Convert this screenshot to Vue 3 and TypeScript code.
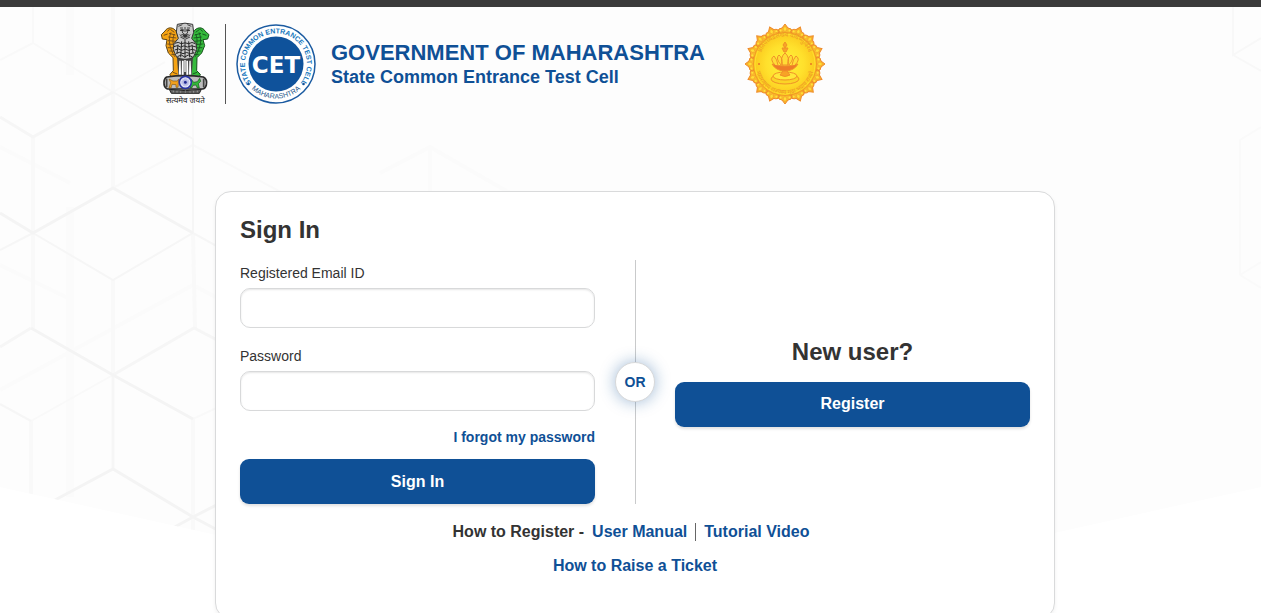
<script setup lang="ts">
import { ref } from 'vue'

interface BackdropLine {
  d: string
  width: number
  color: string
}

const email = ref('')
const password = ref('')

const leftLines: BackdropLine[] = [
  { d: 'M70 0V68 M70 200V490', width: 8, color: '#fbfbfb' },
  { d: 'M0 383L193 278L260 314 M0 140L70 176 M0 258L70 292', width: 4, color: '#fbfbfb' },
  { d: 'M33 0V36L113 85 M33 36L0 53 M193 0V132 M113 85L165 55 M113 181L193 138L290 190 M113 368L31 414 M113 368L193 412L240 390', width: 2, color: '#f9f9f9' },
  { d: 'M113 0V85 M33 130V226 M113 85V181 M33 226V321 M113 273V368 M193 226L195 321 M31 414V500 M193 412V530', width: 4, color: '#f9f9f9' },
  { d: 'M33 226L113 273L193 226L240 252 M33 226L0 243 M0 397L31 414 M113 85L193 132V226', width: 2, color: '#f6f6f6' },
  { d: 'M0 110L33 130L113 85 M0 340L31 321 M113 368L194 321L240 345 M113 368V462', width: 3, color: '#f6f6f6' },
  { d: 'M0 206L33 226L113 181L193 226 M31 321L113 368L193 412 M55 493L113 462L193 510L240 535 M160 528L193 510L240 486', width: 3, color: '#f4f4f4' },
  { d: 'M380 166L430 140L510 186 M430 140V186', width: 4, color: '#fbfbfb' },
]

const petals = Array.from({ length: 16 }, (_, i) => i * 22.5)
const spokes = Array.from({ length: 12 }, (_, i) => i * 15)
</script>

<template>
  <div class="page">
    <div class="topbar"></div>

    <div class="backdrop" aria-hidden="true">
      <svg class="pattern-left" width="520" height="540" viewBox="0 0 520 540" fill="none">
        <path v-for="line in leftLines" :key="line.d" :d="line.d" :stroke="line.color" :stroke-width="line.width" />
      </svg>
      <svg class="pattern-right" width="30" height="300" viewBox="0 0 30 300" fill="none" stroke="#f8f8f8" stroke-width="2">
        <path d="M2 0V48L30 31M2 48L30 64" />
        <path d="M9 250V133L30 120M9 268V250M9 268L30 255M9 268L30 281" stroke="#fafafa" />
      </svg>
    </div>

    <header class="header">
      <svg class="emblem" viewBox="15 12 150 252" role="img" aria-label="State Emblem of India">
        <!-- side lions -->
        <path fill="#f5a313" stroke="#5c451a" stroke-width="3" d="M65 42C55 26 38 26 30 39L19 50L22 63L36 65L33 83L40 105L54 119L55 158L45 169L47 177H72L78 76Z" />
        <path fill="#35ba3c" stroke="#17511d" stroke-width="3" d="M115 42C125 26 143 26 150 39L162 50L158 63L144 65L149 83L140 105L126 119L125 158L136 169L133 177H109L102 76Z" />
        <g fill="none" stroke="#76501b" stroke-width="3">
          <path d="M26 52L38 48M37 40L44 34M46 34L58 43M42 46L61 51M40 57L64 60M39 68L65 70M37 78L66 80M38 89L66 90M43 99L67 100M49 109L66 110M48 43C38 67 44 89 59 116M58 48C51 65 52 83 67 105M54 163L67 168" />
        </g>
        <g fill="none" stroke="#185c20" stroke-width="3">
          <path d="M154 52L142 48M143 40L136 34M134 34L122 43M138 46L119 51M140 57L116 60M141 68L115 70M143 78L114 80M142 89L114 90M137 99L113 100M131 109L114 110M132 43C142 67 136 89 121 116M122 48C129 65 128 83 113 105M126 163L113 168" />
        </g>
        <!-- central lion -->
        <path fill="#444" d="M66 118H114L110 176H70Z" />
        <path fill="#c9c9c9" stroke="#333" stroke-width="3" d="M67 19Q90 12 113 19L116 43L110 61L123 77L125 95L115 118Q90 130 65 118L55 95L57 77L70 61L64 42Z" />
        <path fill="none" stroke="#444" stroke-width="3" d="M70 25L82 20M109 25L97 20M75 30H84M96 30H105M75 37L84 39L82 45M105 37L96 39L98 45M90 27V42M83 45L90 50L98 45M74 50Q90 66 106 50M76 57L90 64L105 57M79 50H101" />
        <path fill="#333" d="M77 34h9v5h-9zM94 34h9v5h-9zM83 51h15l-4 7h-7z" />
        <g fill="none" stroke="#292929" stroke-width="3">
          <path d="M59 76Q70 70 79 77Q90 72 101 77Q111 70 121 77M57 86Q68 79 77 87Q87 80 97 87Q110 80 123 87M59 96Q70 89 80 97Q91 90 101 97Q111 91 122 97M63 106Q75 99 84 107Q95 100 106 107L118 104M67 116L79 111L89 117L100 111L113 117M69 80L66 107M80 70L77 118M90 66V120M101 70L104 118M111 80L114 107" />
        </g>
        <path fill="#fff" d="M73 128h4l1 42h-7zM81 128h5v43h-6zM94 128h5l1 43h-6zM103 128h4l2 42h-7zM88 126h4v36h-4z" />
        <!-- abacus -->
        <path fill="#bdbdbd" stroke="#2b2b2b" stroke-width="5" d="M35 177Q90 169 145 177Q158 184 154 201Q152 210 143 213H37Q26 208 27 192Q27 182 35 177Z" />
        <path fill="#f2a01d" stroke="#8a5b10" stroke-width="2" d="M42 183L54 189H67L71 183L69 208H63V200L51 199L48 210H42L47 194Z" />
        <path fill="#32b83a" stroke="#17511d" stroke-width="2" d="M109 184L116 193L127 191L134 181L137 190L130 197L133 210H127L123 201L114 202L110 210H106Z" />
        <circle cx="91" cy="193" r="18" fill="#f6f6ff" stroke="#2b35a3" stroke-width="5" />
        <g stroke="#6970c3" stroke-width="1">
          <path v-for="a in spokes" :key="a" d="M78 193H104" :transform="`rotate(${a} 91 193)`" />
        </g>
        <circle cx="91" cy="193" r="4" fill="#202891" />
        <path fill="none" stroke="#444" stroke-width="5" d="M35 182V207M146 182V207" />
        <path fill="#606060" stroke="#242424" stroke-width="3" d="M43 214Q91 222 139 214L133 226H49Z" />
        <path stroke="#bbb" stroke-width="2" d="M55 218v5M66 219v5M77 220v4M91 220v4M105 220v4M116 219v5M127 218v5" />
        <text x="91" y="256" text-anchor="middle" class="motto">सत्यमेव जयते</text>
      </svg>

      <div class="rule"></div>

      <svg class="cet" viewBox="0 0 80 80" role="img" aria-label="State Common Entrance Test Cell, Maharashtra">
        <defs>
          <path id="cetTop" d="M16.5 60.5A31 31 0 1 1 63.500 60.500" />
          <path id="cetBottom" d="M7 53A36 36 0 0 0 73 53" />
        </defs>
        <circle cx="40" cy="40" r="39" fill="#fff" stroke="#1b5ba1" stroke-width="1.5" />
        <circle cx="40" cy="40" r="27.500" fill="#0f529b" />
        <text class="cet-ring" text-anchor="middle"><textPath href="#cetTop" startOffset="50%">STATE COMMON ENTRANCE TEST CELL</textPath></text>
        <text class="cet-state" text-anchor="middle"><textPath href="#cetBottom" startOffset="50%">MAHARASHTRA</textPath></text>
        <circle cx="12.500" cy="60" r="1.3" fill="#0f529b" />
        <circle cx="67.500" cy="60" r="1.3" fill="#0f529b" />
        <text x="40" y="49" text-anchor="middle" class="cet-name">CET</text>
      </svg>

      <div class="titles">
        <h1>GOVERNMENT OF MAHARASHTRA</h1>
        <p>State Common Entrance Test Cell</p>
      </div>

      <svg class="seal" viewBox="0 0 80 80" role="img" aria-label="Seal of Maharashtra">
        <defs>
          <radialGradient id="gold">
            <stop offset="0" stop-color="#fff23c" />
            <stop offset="0.6" stop-color="#ffe02c" />
            <stop offset="1" stop-color="#fbc81d" />
          </radialGradient>
          <path id="sealTop" d="M15 43A25.500 25.500 0 1 1 65 43" />
          <path id="sealBottom" d="M11 46A29.500 29.500 0 0 0 69 46" />
        </defs>
        <circle cx="40" cy="40" r="35" fill="#f5a326" />
        <g v-for="a in petals" :key="a" :transform="`rotate(${a} 40 40)`">
          <path d="M33 8Q33 4 37 4L40 0L43 4Q47 4 47 8L43 10H37Z" fill="#f9b92c" stroke="#ee8a2b" stroke-width="1" />
          <path d="M40 2L42 5L40 8L38 5Z" fill="#ffdf36" stroke="#f2962a" stroke-width="0.5" />
          <circle cx="35.500" cy="6.500" r="1" fill="#ffe23c" />
          <circle cx="44.500" cy="6.500" r="1" fill="#ffe23c" />
        </g>
        <circle cx="40" cy="40" r="31.500" fill="url(#gold)" stroke="#f29a26" stroke-width="1" />
        <circle cx="40" cy="40" r="30" fill="none" stroke="#ffe02f" stroke-width="1" />
        <text class="seal-text" text-anchor="middle"><textPath href="#sealTop" startOffset="50%">प्रतिपच्चंद्रलेखेव वर्धिष्णुर्विश्व</textPath></text>
        <text class="seal-text" text-anchor="middle"><textPath href="#sealBottom" startOffset="50%">महाराष्ट्रस्य राज्यस्य मुद्रा भद्राय राजते</textPath></text>
        <circle cx="14" cy="40" r="1" fill="#e87526" />
        <circle cx="66" cy="40" r="1" fill="#e87526" />
        <g fill="#f8a326" stroke="#f09028" stroke-width="1">
          <ellipse cx="40" cy="55" rx="14" ry="5" fill="#fbd426" />
          <ellipse cx="40" cy="52" rx="12" ry="4" fill="#ffe83a" />
          <path d="M37 43H43L42 47L45 51Q40 54 35 51L38 47Z" />
          <path d="M27 40Q40 44 53 40Q49 47 40 47Q31 47 27 40Z" fill="#ee7c28" />
          <path d="M30 41Q24 35 29 32Q32 35 33 41M36 41Q30 34 34 31Q38 34 37 41M44 41Q50 34 46 31Q42 34 43 41M50 41Q56 35 51 32Q48 35 47 41M37 41Q35 33 40 29Q45 33 43 41Z" fill="#ffdc36" />
          <path d="M40 18L42 21L40 24L38 21ZM37 24H43L41 28H39Z" />
        </g>
      </svg>
    </header>

    <main class="card">
      <h2>Sign In</h2>
      <div class="columns">
        <form class="signin" @submit.prevent>
          <div class="field">
            <label for="email">Registered Email ID</label>
            <input id="email" v-model="email" type="email" />
          </div>
          <div class="field">
            <label for="password">Password</label>
            <input id="password" v-model="password" type="password" />
          </div>
          <a class="forgot" href="#">I forgot my password</a>
          <button class="button" type="submit">Sign In</button>
        </form>

        <div class="divider"><span>OR</span></div>

        <section class="register">
          <h2>New user?</h2>
          <button class="button" type="button">Register</button>
        </section>
      </div>

      <nav class="help" aria-label="Help">
        <div class="help-row">
          <span>How to Register -</span>
          <a href="#">User Manual</a>
          <a href="#">Tutorial Video</a>
        </div>
        <div class="help-row">
          <a href="#">How to Raise a Ticket</a>
        </div>
      </nav>
    </main>
  </div>
</template>

<style>
body {
  margin: 0;
  background: #fff;
}
</style>

<style scoped>
* {
  box-sizing: border-box;
}

.page {
  position: relative;
  padding-left: 9px;
  overflow: hidden;
  color: #333;
  font-family: "Liberation Sans", Arial, sans-serif;
}

.topbar {
  height: 7px;
  margin-left: -9px;
  background: #3b3b3b;
}

.backdrop {
  position: absolute;
  top: 7px;
  left: 0;
  right: 0;
  height: 606px;
  overflow: hidden;
  background: #fdfdfd;
  clip-path: polygon(0 0, 100% 0, 100% 480px, 50% 620px, 0 480px);
}

.pattern-left {
  position: absolute;
  top: 0;
  left: 0;
}

.pattern-right {
  position: absolute;
  top: 0;
  right: 0;
}

.header {
  position: relative;
  display: flex;
  align-items: center;
  max-width: 950px;
  margin: 0 auto;
  padding-top: 15px;
}

.emblem {
  width: 50px;
  height: 84px;
}

.motto {
  fill: #222;
  font-family: "Noto Sans", "Noto Sans Devanagari", sans-serif;
  font-size: 24px;
}

.rule {
  width: 1px;
  height: 80px;
  margin: 0 10px 0 15px;
  background: #555;
}

.cet,
.seal {
  width: 80px;
  height: 80px;
}

.cet-ring {
  fill: #1877bd;
  font-size: 7px;
  font-weight: 700;
}

.cet-state {
  fill: #24578b;
  font-size: 7px;
}

.cet-name {
  fill: #fff;
  font-family: "DejaVu Sans", sans-serif;
  font-size: 23px;
  font-weight: 700;
}

.titles {
  margin: 0 40px 0 15px;
  color: #0f5096;
  font-weight: 700;
}

.titles h1 {
  margin: 0;
  font-size: 22px;
  line-height: 27px;
}

.titles p {
  margin: 0;
  font-size: 18px;
  line-height: 23px;
}

.seal-text {
  fill: #ee9826;
  font-family: "Noto Sans", "Noto Sans Devanagari", sans-serif;
  font-size: 6px;
}

.card {
  position: relative;
  max-width: 840px;
  margin: 85px auto 0;
  padding: 24px 24px 40px;
  border: 1px solid #d9dadb;
  border-radius: 16px;
  background: #fff;
  box-shadow: 0 2px 4px rgba(0, 0, 0, 0.06);
}

h2 {
  margin: 0 0 16px;
  font-size: 24px;
  font-weight: 700;
  line-height: 28px;
}

.columns {
  display: grid;
  grid-template-columns: 1fr 80px 1fr;
}

.signin {
  display: flex;
  flex-direction: column;
}

.field {
  display: flex;
  flex-direction: column;
  gap: 2px;
  margin-bottom: 15px;
}

.field label {
  font-size: 14px;
  line-height: 26px;
}

.field input {
  width: 100%;
  height: 40px;
  padding: 0 12px;
  border: 1px solid #d8d9da;
  border-radius: 10px;
  background: #fff;
  box-shadow: inset 0 1px 2px rgba(0, 0, 0, 0.1);
  font: inherit;
  font-size: 14px;
}

.forgot {
  align-self: flex-end;
  margin-bottom: 11px;
  font-size: 14px;
  line-height: 22px;
}

a {
  color: #0f5096;
  font-weight: 700;
  text-decoration: none;
}

.button {
  display: block;
  width: 100%;
  height: 45px;
  border: 0;
  border-radius: 9px;
  background: #0f5096;
  box-shadow: 0 2px 3px rgba(0, 0, 0, 0.12);
  color: #fff;
  font: inherit;
  font-size: 16px;
  font-weight: 700;
}

.divider {
  display: flex;
  align-items: center;
  justify-content: center;
  background: linear-gradient(#c9cacb, #c9cacb) center / 1px 100% no-repeat;
}

.divider span {
  width: 40px;
  height: 40px;
  border: 1px solid #d8d9da;
  border-radius: 50%;
  background: #fff;
  box-shadow: 0 0 16px rgba(15, 80, 150, 0.4);
  color: #0f5096;
  font-size: 14px;
  font-weight: 700;
  line-height: 38px;
  text-align: center;
}

.register {
  display: flex;
  flex-direction: column;
  justify-content: center;
  text-align: center;
}

.help {
  display: flex;
  flex-direction: column;
  gap: 10px;
  margin-top: 16px;
  font-size: 16px;
  font-weight: 700;
}

.help-row {
  display: flex;
  align-items: center;
  justify-content: center;
  min-height: 24px;
  line-height: 24px;
}

.help-row a {
  padding: 0 8px;
  line-height: 18px;
}

.help-row a + a {
  border-left: 1px solid #666;
}
</style>
